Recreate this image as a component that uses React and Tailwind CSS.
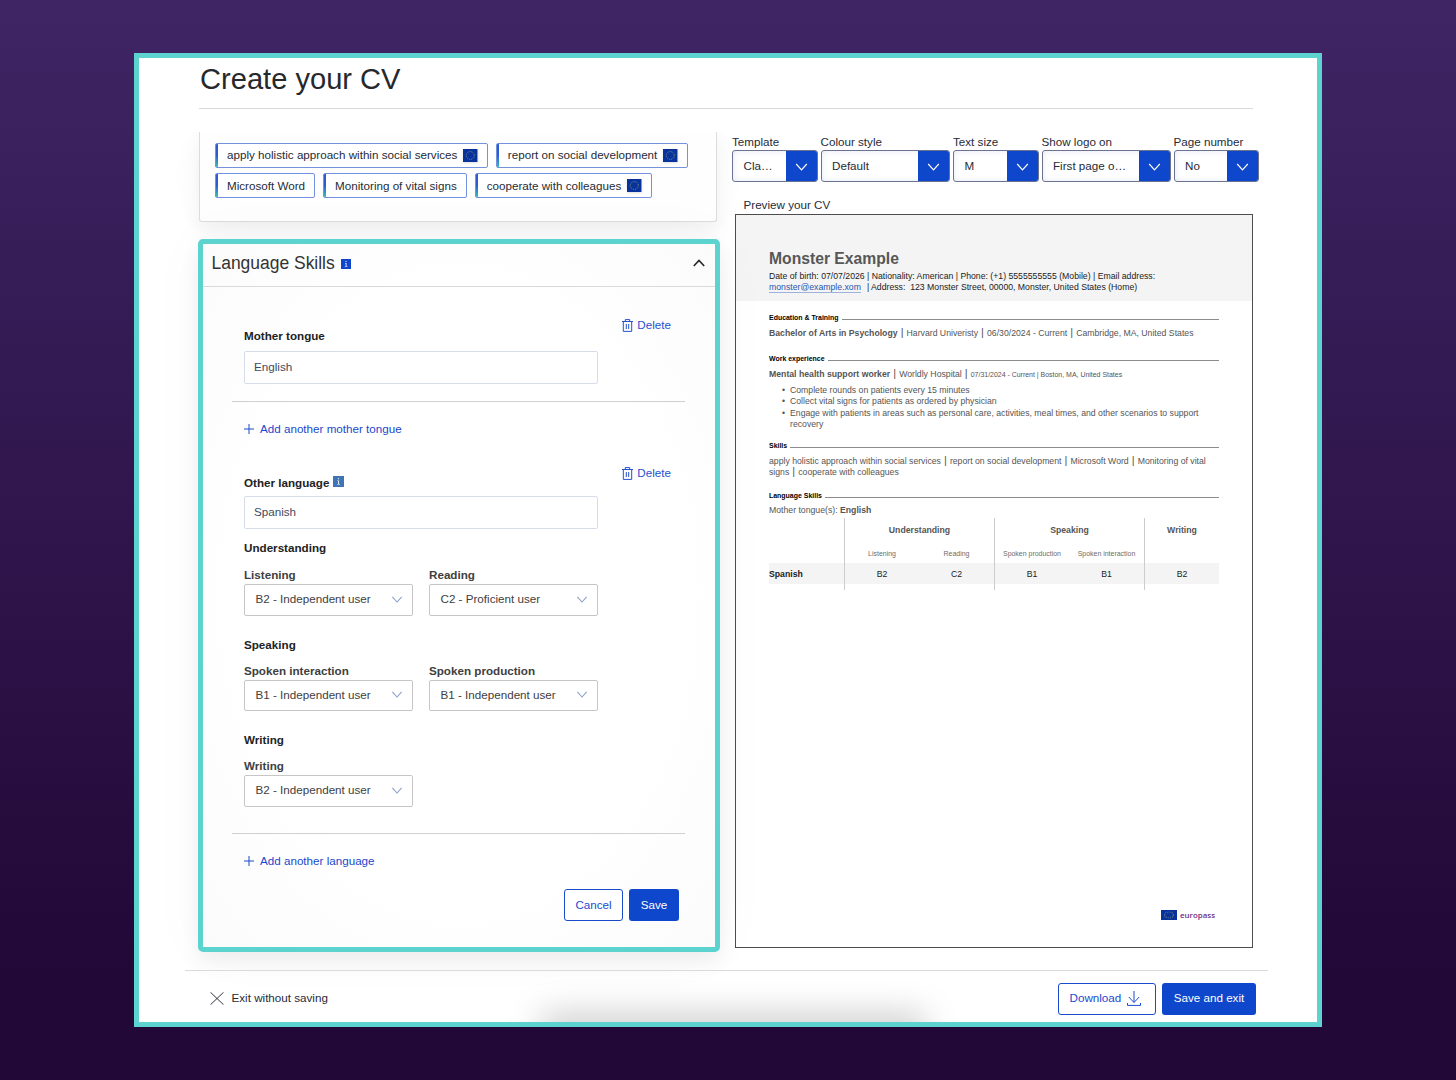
const EuFlag = ({ className }) => (
  <svg className={className} viewBox="0 0 14 13" preserveAspectRatio="none">
    <rect width="14" height="13" fill="#08339c" />
    <circle cx="7" cy="6.5" r="3.9" fill="none" stroke="#8f9a62" strokeWidth="0.9" strokeDasharray="0.95 1.09" />
  </svg>
);

const ChevronDown = ({ className }) => (
  <svg className={className} viewBox="0 0 12 8" fill="none" stroke="currentColor" strokeWidth="1.2">
    <path d="M0.7 1 6 6.9 11.3 1" />
  </svg>
);

const InfoIcon = ({ className }) => (
  <svg className={className} viewBox="0 0 10 10">
    <rect width="10" height="10" fill="currentColor" />
    <path d="M4.5 2h1v1h-1zM4 4h1.5v3.2H6.5v.6H3.7v-.6h1V4.6H4z" fill="#fff" />
  </svg>
);

const TrashIcon = () => (
  <svg className="h-[13px] w-[11px]" viewBox="0 0 11 13" fill="none" stroke="currentColor" strokeWidth="1">
    <path d="M0 2.5h11M3.3 2.4V.6h4.4v1.8M1.3 2.6v9.8h8.4V2.6M4.3 5v5M6.7 5v5" />
  </svg>
);

const Chip = ({ label, eu }) => (
  <div className="relative flex h-[25px] items-center overflow-hidden rounded-[2px] border border-[#7391dc] bg-white pr-[9px] pl-[11px]">
    <span className="absolute -top-px bottom-[-1px] -left-px w-[3px] bg-linear-to-b from-[#2f5bd0] from-50% to-[#3fc4b0]" />
    <span>{label}</span>
    {eu && <EuFlag className="ml-[6px] h-[13px] w-[14.5px] shadow-sm" />}
  </div>
);

const TopSelect = ({ label, value, className }) => (
  <div className={className}>
    <div className="h-[18px] leading-[19px] whitespace-nowrap">{label}</div>
    <div className="flex h-[32px] overflow-hidden rounded-[3px] border border-[#6c7390] bg-white shadow-[inset_0_0_6px_rgba(60,70,180,0.12)]">
      <span className="flex-1 pl-[10.5px] leading-[30px] whitespace-nowrap">{value}</span>
      <span className="flex w-[31px] items-center justify-center bg-[#0e47cb] text-white">
        <ChevronDown className="mt-[2px] h-[8px] w-[13px]" />
      </span>
    </div>
  </div>
);

const LevelSelect = ({ label, value }) => (
  <div className="w-[168.5px]">
    <div className="h-[18px] leading-[17px] font-bold text-[#404040]">{label}</div>
    <div className="flex h-[31.5px] items-center justify-between rounded-[2px] border border-[#c6c6c6] bg-white pr-[9px] pb-px pl-[10.5px] text-[#404040]">
      <span>{value}</span>
      <ChevronDown className="h-[7px] w-[12px] text-[#8aa0c8]" />
    </div>
  </div>
);

const Delete = () => (
  <div className="flex h-[14px] items-center gap-[4px] text-[#2550cf]">
    <TrashIcon />
    <span>Delete</span>
  </div>
);

const AddLink = ({ children }) => (
  <div className="flex h-[14px] items-center text-[#1a48cc]">
    <svg className="mr-[6px] h-[10px] w-[10px]" viewBox="0 0 10 10" stroke="currentColor" strokeWidth="1">
      <path d="M0 5h10M5 0v10" />
    </svg>
    {children}
  </div>
);

const CvHeading = ({ children }) => (
  <div className="flex h-[8px] items-center text-[6.96px] leading-[8px] font-bold text-black">
    {children}
    <span className="mt-[3px] ml-[3px] h-px flex-1 bg-[#8b8b8b]" />
  </div>
);

const Bar = () => <span className="text-[11px] leading-none"> | </span>;

const topSelects = [
  { label: "Template", value: "Cla…", className: "w-[85.5px]" },
  { label: "Colour style", value: "Default", className: "w-[129.5px]" },
  { label: "Text size", value: "M", className: "w-[85.5px]" },
  { label: "Show logo on", value: "First page o…", className: "w-[129px]" },
  { label: "Page number", value: "No", className: "w-[85.5px]" },
];

const SkillsCard = () => (
  <div className="h-[90px] w-[518px] rounded-b-[3px] border border-t-0 border-[#dcdcdc] bg-[#fefefe] pt-[10.5px] pl-[15px] shadow-[0_8px_20px_rgba(0,0,0,0.06),0_0_60px_rgba(0,0,0,0.02)]">
    <div className="flex gap-[8px]">
      <Chip label="apply holistic approach within social services" eu />
      <Chip label="report on social development" eu />
    </div>
    <div className="mt-[5.5px] flex gap-[8px]">
      <Chip label="Microsoft Word" />
      <Chip label="Monitoring of vital signs" />
      <Chip label="cooperate with colleagues" eu />
    </div>
  </div>
);

const LanguageCard = () => (
  <div className="mt-[17px] -ml-px h-[713px] w-[522px] rounded-[5px] border-[5px] border-[#5dd3d0] bg-[radial-gradient(ellipse_at_center,#fff_60%,#fbfbfb)] shadow-[0_10px_20px_rgba(0,0,0,0.06),0_0_60px_rgba(0,0,0,0.03)]">
    <div className="flex h-[43px] items-center border-b border-[#dadada] pr-[10px] pl-[8.5px]">
      <h2 className="-mt-[4px] text-[17.47px] text-[#333]">Language Skills</h2>
      <InfoIcon className="mt-[-2px] ml-[6px] h-[10px] w-[10px] text-[#1146cc]" />
      <svg className="mt-[-4px] ml-auto h-[8px] w-[12px]" viewBox="0 0 12 8" fill="none" stroke="#262626" strokeWidth="1.6">
        <path d="M0.8 7 6 1.4 11.2 7" />
      </svg>
    </div>
    <div className="mr-[30px] ml-[29px]">
      {/* Mother tongue */}
      <div className="h-[115px] border-b border-[#d0d0d0] pt-[31px] pr-[14px] pl-[12px]">
        <div className="flex justify-between">
          <div className="mt-[10px] h-[23px] leading-[16px] font-bold text-[#222]">Mother tongue</div>
          <Delete />
        </div>
        <div className="h-[33px] w-[354px] rounded-[2px] border border-[#d5dde8] bg-white pl-[9px] leading-[29px] text-[#3e4a5e]">English</div>
      </div>
      <div className="pt-[20px] pl-[12px]">
        <AddLink>Add another mother tongue</AddLink>
      </div>

      {/* Other language */}
      <div className="mt-[30px] h-[368px] border-b border-[#d0d0d0] pr-[14px] pl-[12px]">
        <div className="flex justify-between">
          <div className="mt-[9px] flex h-[21px] leading-[16px] font-bold text-[#222]">
            Other language
            <InfoIcon className="mt-px ml-[4px] h-[11px] w-[11px] text-[#3f74b5]" />
          </div>
          <Delete />
        </div>
        <div className="h-[33px] w-[354px] rounded-[2px] border border-[#d5dde8] bg-white pl-[9px] leading-[29px] text-[#3e4a5e]">Spanish</div>
        <div className="mt-[11px] h-[26px] leading-[16px] font-bold text-[#222]">Understanding</div>
        <div className="flex gap-[16.5px]">
          <LevelSelect label="Listening" value="B2 - Independent user" />
          <LevelSelect label="Reading" value="C2 - Proficient user" />
        </div>
        <div className="mt-[20px] h-[26px] leading-[18px] font-bold text-[#222]">Speaking</div>
        <div className="flex gap-[16.5px]">
          <LevelSelect label="Spoken interaction" value="B1 - Independent user" />
          <LevelSelect label="Spoken production" value="B1 - Independent user" />
        </div>
        <div className="mt-[20px] h-[26px] leading-[18px] font-bold text-[#222]">Writing</div>
        <LevelSelect label="Writing" value="B2 - Independent user" />
      </div>
      <div className="pt-[20px] pl-[12px]">
        <AddLink>Add another language</AddLink>
      </div>
      <div className="mt-[21px] flex justify-end gap-[6px] pr-[6px]">
        <button className="h-[32px] w-[59px] rounded-[3px] border border-[#1a4bcd] bg-white text-[#1a4bcd]">Cancel</button>
        <button className="h-[32px] w-[50px] rounded-[3px] bg-[#0e47cb] text-white">Save</button>
      </div>
    </div>
  </div>
);

const LanguageTable = () => (
  <div className="mt-px text-center text-[8.7px] text-[#222]">
    <div className="grid grid-cols-[75px_150px_150px_75px] font-bold text-[#555]">
      <div />
      <div className="h-[28px] border-l border-[#ccc] leading-[24px]">Understanding</div>
      <div className="h-[28px] border-l border-[#ccc] leading-[24px]">Speaking</div>
      <div className="h-[28px] border-l border-[#ccc] leading-[24px]">Writing</div>
    </div>
    <div className="grid h-[17px] grid-cols-[75px_75px_75px_75px_75px_75px] text-[6.96px] leading-[15px] text-[#6c6c6c]">
      <div />
      <div className="border-l border-[#ccc]">Listening</div>
      <div>Reading</div>
      <div className="border-l border-[#ccc] whitespace-nowrap">Spoken production</div>
      <div className="whitespace-nowrap">Spoken interaction</div>
      <div className="border-l border-[#ccc]" />
    </div>
    <div className="grid h-[21px] grid-cols-[75px_75px_75px_75px_75px_75px] bg-[#f4f4f4] leading-[22px]">
      <div className="text-left font-bold">Spanish</div>
      <div className="border-l border-[#ccc]">B2</div>
      <div>C2</div>
      <div className="border-l border-[#ccc]">B1</div>
      <div>B1</div>
      <div className="border-l border-[#ccc]">B2</div>
    </div>
    <div className="grid h-[6px] grid-cols-[75px_150px_150px_75px]">
      <div />
      <div className="border-l border-[#ccc]" />
      <div className="border-l border-[#ccc]" />
      <div className="border-l border-[#ccc]" />
    </div>
  </div>
);

const CvPreview = () => (
  <div className="ml-[3px] flex h-[734px] w-[518px] flex-col border border-[#4d4d4d] bg-white text-[8.7px] leading-[11.4px] text-[#555]">
    <div className="h-[86px] bg-[#f4f4f4] pt-[34px] pl-[33px] whitespace-nowrap text-[#222]">
      <div className="h-[22px] text-[15.7px] leading-[19px] font-bold text-[#575757]">Monster Example</div>
      <div className="h-[11px]">Date of birth: 07/07/2026 | Nationality: American | Phone: (+1) 5555555555 (Mobile) | Email address:</div>
      <div>
        <span className="border-b border-[#9db3de] text-[#2757b0]">monster@example.xom</span>
        <span className="ml-[6px]">| Address:&nbsp; 123 Monster Street, 00000, Monster, United States (Home)</span>
      </div>
    </div>
    <div className="w-[483px] pt-[13px] pl-[33px]">
      <CvHeading>Education &amp; Training</CvHeading>
      <div className="mt-[5px] h-[12px] whitespace-nowrap">
        <b>Bachelor of Arts in Psychology</b><Bar />Harvard Univeristy<Bar />06/30/2024 - Current<Bar />Cambridge, MA, United States
      </div>

      <div className="mt-[16px]">
        <CvHeading>Work experience</CvHeading>
      </div>
      <div className="mt-[5px] h-[12px] whitespace-nowrap">
        <b>Mental health support worker</b><Bar />Worldly Hospital<Bar />
        <span className="text-[6.96px]">07/31/2024 - Current | Boston, MA, United States</span>
      </div>
      <ul className="mt-[5px] ml-[13px]">
        {[
          "Complete rounds on patients every 15 minutes",
          "Collect vital signs for patients as ordered by physician",
          "Engage with patients in areas such as personal care, activities, meal times, and other scenarios to support recovery",
        ].map((item) => (
          <li key={item} className="flex">
            <span className="w-[8px] shrink-0">•</span>
            <span>{item}</span>
          </li>
        ))}
      </ul>

      <div className="mt-[11px]">
        <CvHeading>Skills</CvHeading>
      </div>
      <div className="mt-[5px] h-[23px] whitespace-nowrap">
        <div className="h-[11px]">
          apply holistic approach within social services<Bar />report on social development<Bar />Microsoft Word<Bar />Monitoring of vital
        </div>
        <div className="h-[11px]">
          signs<Bar />cooperate with colleagues
        </div>
      </div>

      <div className="mt-[14px]">
        <CvHeading>Language Skills</CvHeading>
      </div>
      <div className="mt-[5px] h-[12px]">
        Mother tongue(s): <b>English</b>
      </div>
      <LanguageTable />
    </div>
    <div className="mt-auto mr-[37px] mb-[26px] flex items-center justify-end gap-[3px]">
      <EuFlag className="h-[10px] w-[16px]" />
      <span className="font-['Open_Sans',sans-serif] text-[7.9px] font-semibold text-[#6c2c86]">europass</span>
    </div>
  </div>
);

export default function App() {
  return (
    <div className="flex h-[1080px] w-[1456px] bg-linear-to-b from-[#3f2564] to-[#220837] to-90% pt-[53px] pl-[134px] font-['Liberation_Sans',Arial,sans-serif] text-[11.65px] leading-[14px] text-[#262b38]">
      <div className="relative h-[974px] w-[1188px] overflow-hidden border-[5px] border-[#5dd3d0] bg-white">
        <div className="absolute bottom-[-24px] left-[400px] h-[34px] w-[388px] rounded-[14px] bg-black/18 blur-[16px]" />

        <header className="mr-[64px] ml-[60px] h-[51px] border-b border-[#dadada]">
          <h1 className="pl-px text-[29.1px] leading-[42px] text-[#26282c]">Create your CV</h1>
        </header>

        <main className="mt-[23px] ml-[60px] flex h-[838px]">
          <section className="w-[533px] [clip-path:inset(0_-60px_-60px_-60px)]">
            <SkillsCard />
            <LanguageCard />
          </section>
          <section>
            <div className="flex gap-[3px]">
              {topSelects.map((s) => (
                <TopSelect key={s.label} {...s} />
              ))}
            </div>
            <div className="mt-[16px] h-[16px] pl-[11.5px] leading-[14px]">Preview your CV</div>
            <CvPreview />
          </section>
        </main>

        <footer className="relative mr-[49px] ml-[46px] flex h-[52px] items-start border-t border-[#dadada] pt-[12px] pr-[12px] pl-[25px]">
          <div className="flex h-[32px] items-center gap-[7.5px] pb-[2px]">
            <svg className="h-[13px] w-[14px]" viewBox="0 0 14 13" stroke="#30343f" strokeWidth="1">
              <path d="M.5.3 13.5 12.7M13.5.3.5 12.7" />
            </svg>
            Exit without saving
          </div>
          <button className="ml-auto flex h-[32px] w-[98px] items-center gap-[6px] rounded-[3px] border border-[#1a4bcd] bg-white pb-[2px] pl-[10.5px] text-[#1a4bcd]">
            Download
            <svg className="h-[15px] w-[14px]" viewBox="0 0 14 15" fill="none" stroke="currentColor" strokeWidth="1">
              <path d="M7 0v11.3M1.8 6 7 11.5 12.2 6M.5 12v2.4h13V12" />
            </svg>
          </button>
          <button className="ml-[6px] h-[32px] w-[94px] rounded-[3px] bg-[#0e47cb] pb-[2px] text-white">Save and exit</button>
        </footer>
      </div>
    </div>
  );
}
